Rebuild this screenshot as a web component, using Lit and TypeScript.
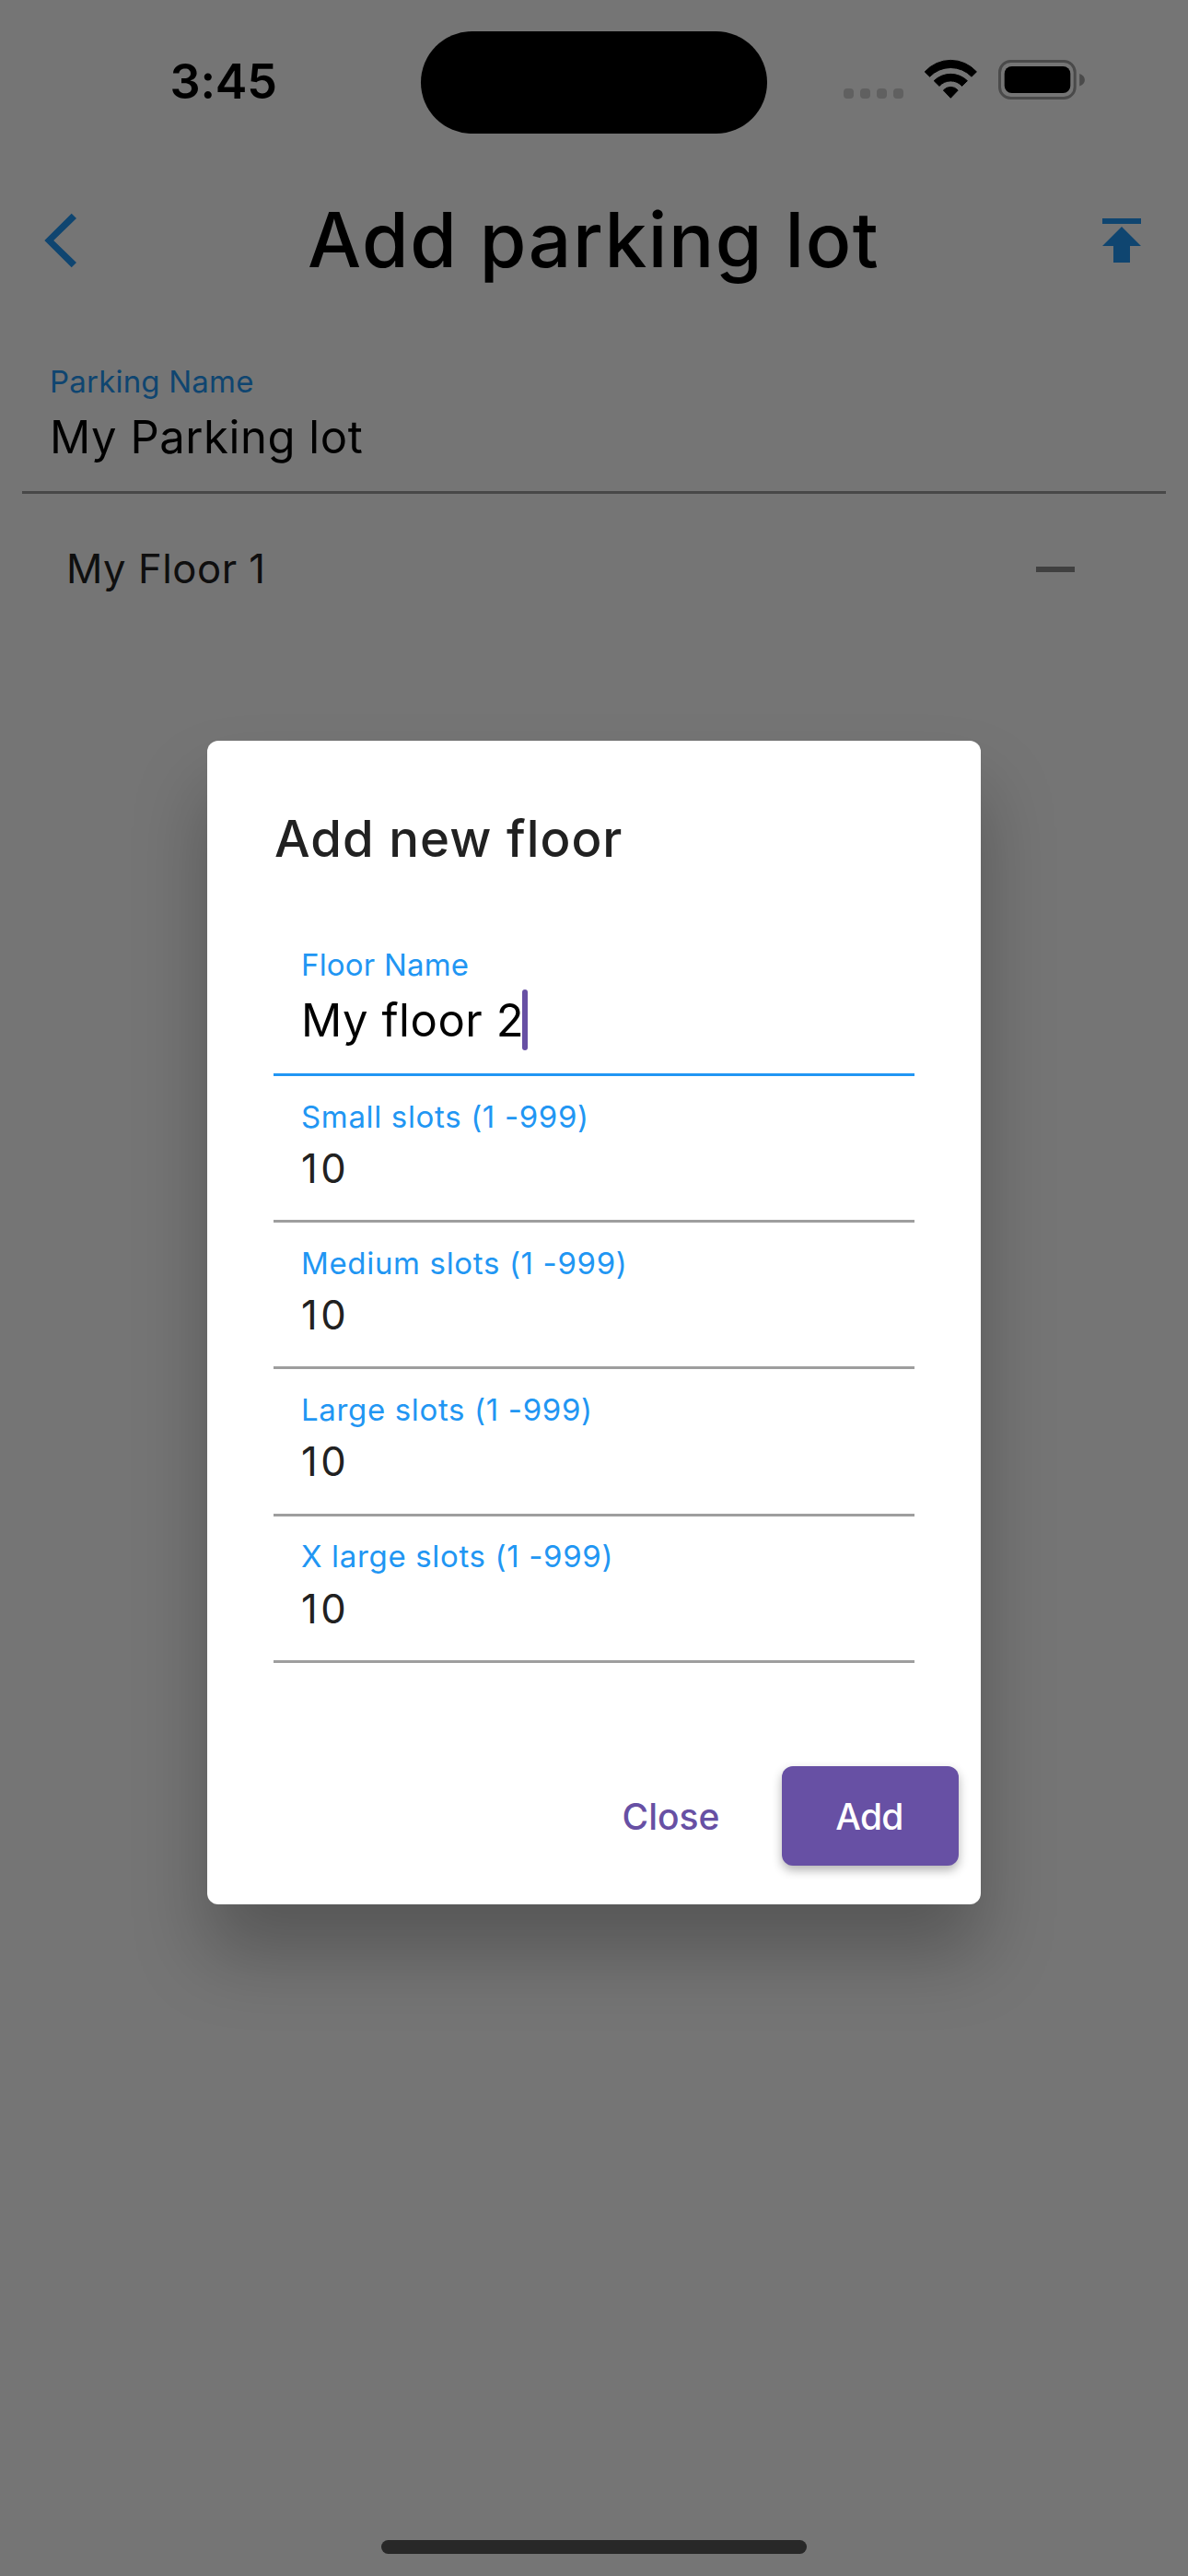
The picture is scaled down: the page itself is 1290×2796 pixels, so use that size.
import { LitElement, html, css } from "lit";
import { customElement, property } from "lit/decorators.js";

/** Label, value and underline of one text input. */
@customElement("text-field")
export class TextField extends LitElement {
  @property() label = "";
  @property() value = "";
  @property({ type: Boolean, reflect: true }) large = false;
  @property({ type: Boolean, reflect: true }) active = false;

  static styles = css`
    :host {
      display: flex;
      flex-direction: column;
      box-sizing: border-box;
      height: 159.2px;
      padding: 23.7px 0 0 30px;
      border-bottom: 3px solid #9e9e9e;
      white-space: nowrap;
    }
    :host([large]) {
      height: 190.5px;
      padding-top: 49px;
    }
    :host([active]) {
      height: 168px;
      padding-top: 26.7px;
      border-bottom-color: #2196f3;
    }
    .label {
      font-size: 33px;
      line-height: 40px;
      letter-spacing: 0.66px;
      font-feature-settings: "calt" 0;
      color: #2196f3;
    }
    .value {
      display: flex;
      align-items: center;
      margin-top: 10.4px;
      font-size: 43.6px;
      line-height: 54px;
      letter-spacing: 3.4px;
      color: #212121;
    }
    :host([large]) .value,
    :host([active]) .value {
      margin-top: 11.4px;
      font-size: 49px;
      line-height: 60px;
      letter-spacing: 0.54px;
      color: #000;
    }
    :host([large]) .label,
    :host([active]) .label {
      letter-spacing: 0.2px;
    }
    .caret {
      width: 6px;
      height: 66px;
      margin: -4px 0 -2px -2px;
      border-radius: 3px;
      background: #6750a4;
    }
  `;

  render() {
    return html`
      <div class="label">${this.label}</div>
      <div class="value">
        <span>${this.value}</span>
        ${this.active ? html`<span class="caret"></span>` : null}
      </div>
    `;
  }
}

const SLOTS = [
  { label: "Small slots (1 -999)", value: "10" },
  { label: "Medium slots (1 -999)", value: "10" },
  { label: "Large slots (1 -999)", value: "10" },
  { label: "X large slots (1 -999)", value: "10" },
];

@customElement("app-root")
export class AppRoot extends LitElement {
  static styles = css`
    :host {
      display: block;
      font-family: Inter, "Liberation Sans", sans-serif;
    }
    .screen {
      position: relative;
      display: flex;
      flex-direction: column;
      width: 1290px;
      height: 2796px;
      overflow: hidden;
      background: #fff;
    }
    .status {
      display: flex;
      position: relative;
      z-index: 2;
      flex: none;
      box-sizing: border-box;
      height: 177px;
      padding-top: 33.5px;
      color: #000;
    }
    .time {
      box-sizing: border-box;
      width: 457px;
      padding-left: 184.5px;
      font-size: 52px;
      font-weight: 600;
      line-height: 110px;
      letter-spacing: -0.2px;
    }
    .island {
      width: 376px;
      height: 111px;
      border-radius: 55.5px;
      background: #000;
    }
    .indicators {
      display: flex;
      height: 46px;
      padding: 30.5px 0 0 82px;
    }
    .bar {
      display: flex;
      flex: none;
      align-items: center;
      height: 168px;
    }
    .bar svg {
      display: block;
      flex: none;
    }
    .publish {
      margin-left: auto;
    }
    h1 {
      margin: 0;
      font-size: 82px;
      font-weight: 500;
      line-height: 100px;
      letter-spacing: 1.52px;
      white-space: nowrap;
      color: #000;
    }
    .main {
      flex: 1;
      padding: 0 24px;
    }
    .floor {
      display: flex;
      align-items: center;
      justify-content: space-between;
      height: 164px;
      padding: 0 99px 0 48px;
      font-size: 43.6px;
      letter-spacing: 0.53px;
      color: #212121;
    }
    .minus {
      width: 42px;
      height: 6px;
      background: #8b8b8b;
    }
    .scrim {
      position: absolute;
      inset: 0;
      z-index: 1;
      display: flex;
      flex-direction: column;
      align-items: center;
      padding-top: 803.5px;
      background: rgba(0, 0, 0, 0.54);
    }
    .dialog {
      display: flex;
      flex-direction: column;
      box-sizing: border-box;
      width: 840px;
      height: 1263.8px;
      padding-top: 72.7px;
      border-radius: 12px;
      background: #fff;
      box-shadow: 0 54px 80px rgba(0, 0, 0, 0.26);
    }
    h2 {
      margin: 0 72px 55.8px 73px;
      font-size: 54.5px;
      font-weight: 500;
      line-height: 68px;
      letter-spacing: 1.03px;
      color: #212121;
    }
    .fields {
      padding: 0 72px;
    }
    .actions {
      display: flex;
      justify-content: flex-end;
      align-items: center;
      gap: 67.5px;
      margin-top: 112px;
      padding-right: 24px;
    }
    button {
      margin: 0;
      padding: 2px 0 0;
      border: 0;
      background: none;
      font: 500 39px/48px Inter, "Liberation Sans", sans-serif;
      color: #6750a4;
    }
    .add {
      width: 192px;
      height: 108.5px;
      padding-right: 2px;
      border-radius: 12px;
      background: #6750a4;
      color: #fff;
      letter-spacing: -0.7px;
      box-shadow: 0 5px 11px rgba(0, 0, 0, 0.3);
    }
    .home {
      position: relative;
      z-index: 2;
      flex: none;
      align-self: center;
      width: 462px;
      height: 15px;
      margin-bottom: 24px;
      border-radius: 8px;
      background: #282828;
    }
  `;

  render() {
    return html`
      <div class="screen">
        <div class="status">
          <div class="time">3:45</div>
          <div class="island"></div>
          <div class="indicators">
            <svg width="266" height="46" viewBox="0 0 266 46">
              <g fill="#606060">
                <rect x="1" y="32" width="11" height="11" rx="4" />
                <rect x="19" y="32" width="11" height="11" rx="4" />
                <rect x="37" y="32" width="11" height="11" rx="4" />
                <rect x="55" y="32" width="11" height="11" rx="4" />
              </g>
              <g stroke="#000" stroke-width="1" stroke-linejoin="round">
                <path d="M117.3 42.3 L109.4 34 A10.5 10.5 0 0 1 125.2 34 Z" />
                <path d="M99.2 23.7 A26 26 0 0 1 135.4 23.7 L129.6 29.4 A16.5 16.5 0 0 0 105 29.4 Z" />
                <path d="M89.2 13.9 A37.8 37.8 0 0 1 145.4 13.9 L140 19.2 A31.4 31.4 0 0 0 94.6 19.2 Z" />
              </g>
              <rect x="170.5" y="2.5" width="81.7" height="40" rx="12" fill="none" stroke="#4a4a4a" stroke-width="3" />
              <rect x="175.7" y="8" width="71.6" height="29" rx="8" />
              <path d="M257.2 16 C264.8 18.5 264.8 27 257.2 29.5 Z" fill="#4a4a4a" />
            </svg>
          </div>
        </div>

        <div class="bar">
          <svg width="334" height="80" viewBox="0 0 334 80">
            <path d="M77.7 10.7 L83 16 L58.2 40 L83 64 L77.7 69.3 L48.3 40 Z" fill="#2196f3" />
          </svg>
          <h1>Add parking lot</h1>
          <svg class="publish" width="108" height="72" viewBox="0 0 36 24">
            <path d="M5 4v2h14V4H5zm0 10h4v6h6v-6h4l-7-7-7 7z" fill="#2196f3" />
          </svg>
        </div>

        <div class="main">
          <text-field large label="Parking Name" value="My Parking lot"></text-field>
          <div class="floor"><span>My Floor 1</span><span class="minus"></span></div>
        </div>

        <div class="home"></div>

        <div class="scrim">
          <div class="dialog">
            <h2>Add new floor</h2>
            <div class="fields">
              <text-field active label="Floor Name" value="My floor 2"></text-field>
              ${SLOTS.map((s) => html`<text-field label=${s.label} value=${s.value}></text-field>`)}
            </div>
            <div class="actions">
              <button>Close</button>
              <button class="add">Add</button>
            </div>
          </div>
        </div>
      </div>
    `;
  }
}
